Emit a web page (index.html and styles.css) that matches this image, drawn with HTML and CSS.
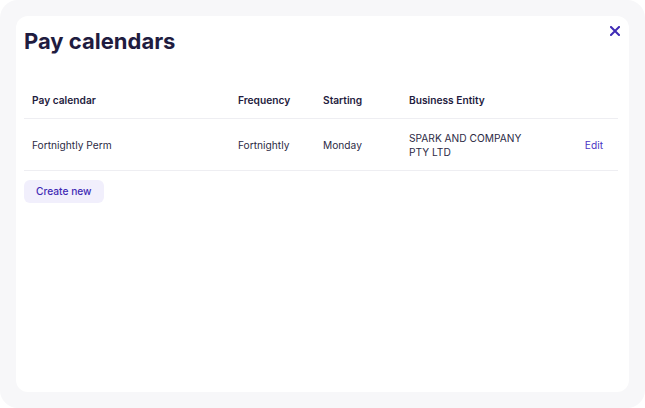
FILE: index.html
```html
<!DOCTYPE html>
<html lang="en">
<head>
<meta charset="utf-8">
<title>Pay calendars</title>
<link rel="stylesheet" href="styles.css">
</head>
<body>
<div class="frame">
  <div class="card">
    <div class="head">
      <h1 class="title">Pay calendars</h1>
      <button class="close" aria-label="Close">
        <svg width="10" height="10" viewBox="0 0 10 10"><path d="M1 1L9 9M9 1L1 9" stroke="#3f2bb5" stroke-width="2" stroke-linecap="square"/></svg>
      </button>
    </div>
    <table class="grid">
      <colgroup>
        <col class="c1"><col class="c2"><col class="c3"><col class="c4"><col class="c5">
      </colgroup>
      <thead>
        <tr>
          <th>Pay calendar</th>
          <th>Frequency</th>
          <th>Starting</th>
          <th>Business Entity</th>
          <th></th>
        </tr>
      </thead>
      <tbody>
        <tr>
          <td>Fortnightly Perm</td>
          <td>Fortnightly</td>
          <td>Monday</td>
          <td class="entity">SPARK AND COMPANY PTY LTD</td>
          <td class="act"><a class="edit" href="#">Edit</a></td>
        </tr>
      </tbody>
    </table>
    <button class="create">Create new</button>
  </div>
</div>
</body>
</html>
```

FILE: styles.css
```css
* { box-sizing: border-box; }
html, body { margin: 0; padding: 0; background: #ffffff; }
body { font-family: Inter, "Noto Sans", sans-serif; color: #1f1c40; }

.frame {
  width: 645px;
  height: 408px;
  padding: 16px;
  background: #f7f7f9;
  border-radius: 18px;
}

.card {
  height: 376px;
  background: #ffffff;
  border-radius: 12px;
  padding: 12px 8px 0 8px;
}

.head {
  display: flex;
  justify-content: space-between;
  align-items: flex-start;
}

.title {
  margin: 0;
  font-size: 22px;
  font-weight: 700;
  line-height: 27px;
  color: #1f1c40;
}

.close {
  border: 0;
  background: none;
  padding: 0;
  width: 10px;
  height: 10px;
  margin: -2px 1px 0 0;
  display: flex;
  cursor: pointer;
}

.grid {
  width: 594px;
  margin-top: 27px;
  border-collapse: collapse;
  table-layout: fixed;
  font-size: 10.2px;
}

.c1 { width: 206px; }
.c2 { width: 85px; }
.c3 { width: 86px; }
.c4 { width: 156px; }
.c5 { width: 61px; }

.grid th {
  text-align: left;
  font-weight: 600;
  color: #1f1c40;
  height: 36px;
  padding: 0 8px;
  border-bottom: 1px solid #eeeef2;
  vertical-align: middle;
}

.grid td {
  color: #2c2a45;
  height: 52px;
  padding: 2px 8px 0 8px;
  line-height: 14px;
  border-bottom: 1px solid #eeeef2;
  vertical-align: middle;
}

.grid td.entity { padding-right: 20px; }

.grid td.act {
  text-align: right;
  padding-right: 15px;
}

.edit {
  color: #4a35c4;
  text-decoration: none;
}

.create {
  margin-top: 9px;
  border: 0;
  border-radius: 6px;
  background: #f1effc;
  color: #3f2bb5;
  font-family: Inter, "Noto Sans", sans-serif;
  font-size: 10.2px;
  font-weight: 500;
  height: 23px;
  padding: 0 12px;
  line-height: 23px;
  cursor: pointer;
}
```
